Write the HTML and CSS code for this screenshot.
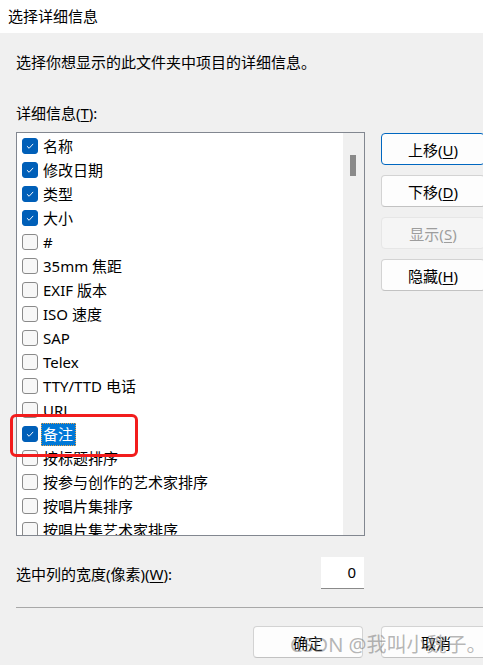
FILE: index.html
```html
<!DOCTYPE html>
<html lang="zh">
<head>
<meta charset="utf-8">
<title>选择详细信息</title>
<link rel="stylesheet" href="styles.css">
</head>
<body>
<div class="window">
  <div class="titlebar">选择详细信息</div>
  <div class="content">
    <p class="desc">选择你想显示的此文件夹中项目的详细信息。</p>
    <p class="label">详细信息(<u>T</u>):</p>
    <div class="main">
      <div class="listbox">
        <ul class="items">
          <li class="item"><span class="cb on"><svg viewBox="0 0 16 16"><path d="M4.5 8.2 L7 10.6 L11.6 5.6" /></svg></span><span class="txt">名称</span></li>
          <li class="item"><span class="cb on"><svg viewBox="0 0 16 16"><path d="M4.5 8.2 L7 10.6 L11.6 5.6" /></svg></span><span class="txt">修改日期</span></li>
          <li class="item"><span class="cb on"><svg viewBox="0 0 16 16"><path d="M4.5 8.2 L7 10.6 L11.6 5.6" /></svg></span><span class="txt">类型</span></li>
          <li class="item"><span class="cb on"><svg viewBox="0 0 16 16"><path d="M4.5 8.2 L7 10.6 L11.6 5.6" /></svg></span><span class="txt">大小</span></li>
          <li class="item"><span class="cb"></span><span class="txt">#</span></li>
          <li class="item"><span class="cb"></span><span class="txt">35mm 焦距</span></li>
          <li class="item"><span class="cb"></span><span class="txt">EXIF 版本</span></li>
          <li class="item"><span class="cb"></span><span class="txt">ISO 速度</span></li>
          <li class="item"><span class="cb"></span><span class="txt">SAP</span></li>
          <li class="item"><span class="cb"></span><span class="txt">Telex</span></li>
          <li class="item"><span class="cb"></span><span class="txt">TTY/TTD 电话</span></li>
          <li class="item"><span class="cb"></span><span class="txt">URL</span></li>
          <li class="item"><span class="cb on"><svg viewBox="0 0 16 16"><path d="M4.5 8.2 L7 10.6 L11.6 5.6" /></svg></span><span class="txt sel">备注</span></li>
          <li class="item"><span class="cb"></span><span class="txt">按标题排序</span></li>
          <li class="item"><span class="cb"></span><span class="txt">按参与创作的艺术家排序</span></li>
          <li class="item"><span class="cb"></span><span class="txt">按唱片集排序</span></li>
          <li class="item"><span class="cb"></span><span class="txt">按唱片集艺术家排序</span></li>
        </ul>
        <div class="scrollbar"><div class="thumb"></div></div>
      </div>
      <div class="side">
        <button class="btn focus">上移(<u>U</u>)</button>
        <button class="btn">下移(<u>D</u>)</button>
        <button class="btn disabled">显示(<u>S</u>)</button>
        <button class="btn">隐藏(<u>H</u>)</button>
      </div>
    </div>
    <div class="widthrow">
      <span class="wlabel">选中列的宽度(像素)(<u>W</u>):</span>
      <div class="numbox">0</div>
    </div>
    <div class="sep"></div>
    <div class="footer">
      <button class="btn fbtn">确定</button>
      <button class="btn fbtn cancel">取消</button>
    </div>
  </div>
  <div class="redbox"></div>
  <div class="watermark">CSDN @我叫小魏子。</div>
</div>
</body>
</html>
```

FILE: styles.css
```css
* { box-sizing: border-box; }
html, body {
  margin: 0;
  padding: 0;
  background: #f0f0f0;
  overflow: hidden;
}
body {
  font-family: "Noto Sans", "Noto Sans CJK SC", sans-serif;
  font-size: 15px;
  color: #000;
}
.window {
  position: relative;
  width: 483px;
  height: 665px;
  overflow: hidden;
}
.titlebar {
  height: 33px;
  background: #fff;
  padding-left: 8px;
  font-size: 15px;
  line-height: 32px;
}
.content {
  padding-left: 16px;
}
.desc {
  margin: 19px 0 0;
  line-height: 20px;
  height: 20px;
}
.label {
  margin: 31px 0 0;
  line-height: 20px;
  height: 20px;
}
u { text-underline-offset: 2px; }
.main {
  display: flex;
  gap: 16px;
  margin-top: 9px;
  height: 404px;
}
.listbox {
  width: 349px;
  height: 404px;
  border: 1px solid #828790;
  background: #fff;
  display: flex;
  overflow: hidden;
  flex: none;
}
.items {
  list-style: none;
  margin: 0;
  padding: 1px 0 0 5px;
  flex: 1;
  overflow: hidden;
}
.item {
  height: 24px;
  display: flex;
  align-items: center;
  gap: 5px;
  white-space: nowrap;
}
.cb {
  width: 16px;
  height: 16px;
  border: 1px solid #8a8a8a;
  border-radius: 3px;
  background: #f7f7f7;
  flex: none;
  display: flex;
}
.cb.on {
  background: #005fb8;
  border-color: #005fb8;
}
.cb svg {
  width: 14px;
  height: 14px;
  fill: none;
  stroke: #fff;
  stroke-width: 1.1;
}
.txt {
  line-height: 22px;
  padding: 0 1px;
  margin-left: -1px;
}
.txt.sel {
  background: #0078d7;
  color: #fff;
  outline: 1px dotted #e8a24a;
  outline-offset: -1px;
  padding: 0 3px 0 2px;
  margin-left: -2px;
  line-height: 23px;
}
.scrollbar {
  width: 21px;
  flex: none;
  background: #f0f0f0;
  padding: 22px 0 0 7px;
}
.thumb {
  width: 6px;
  height: 21px;
  background: #8a8a8a;
}
.side {
  display: flex;
  flex-direction: column;
  gap: 10px;
  padding-top: 1px;
  width: 104px;
  flex: none;
}
.btn {
  font-family: inherit;
  font-size: 15px;
  height: 32px;
  background: #fdfdfd;
  border: 1px solid #d3d3d3;
  border-bottom-color: #c2c2c2;
  border-radius: 4px;
  color: #000;
  padding: 0;
}
.btn.focus {
  border: 1px solid #0067c0;
}
.btn.disabled {
  background: #f5f5f5;
  border-color: #e6e6e6;
  color: #9d9d9d;
}
.widthrow {
  display: flex;
  align-items: center;
  justify-content: space-between;
  width: 348px;
  margin-top: 21px;
  height: 32px;
}
.numbox {
  width: 43px;
  height: 32px;
  background: #fff;
  border-bottom: 1px solid #8a8a8a;
  text-align: right;
  padding-right: 8px;
  line-height: 30px;
}
.sep {
  margin-top: 18px;
  height: 1px;
  background: #a8a8a8;
}
.footer {
  display: flex;
  gap: 18px;
  margin-top: 18px;
  padding-left: 237px;
}
.fbtn {
  width: 110px;
  height: 32px;
  flex: none;
}
.redbox {
  position: absolute;
  left: 10px;
  top: 414px;
  width: 128px;
  height: 43px;
  border: 3px solid #f21c1c;
  border-radius: 6px;
}
.watermark {
  position: absolute;
  left: 290px;
  top: 632px;
  font-size: 20px;
  line-height: 26px;
  color: rgba(120, 120, 120, 0.55);
  white-space: nowrap;
}
```
